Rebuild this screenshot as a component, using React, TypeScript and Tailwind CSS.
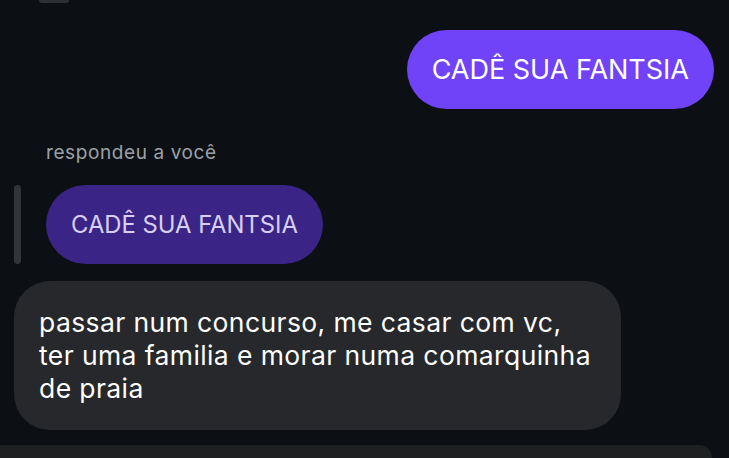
import React from 'react';

const font = { fontFamily: 'Inter, "Noto Sans", sans-serif' };

export default function App() {
  return (
    <div className="w-[729px] h-[458px] overflow-hidden bg-[#0c1014] flex flex-col" style={font}>
      {/* edge of previous bubble */}
      <div className="h-[3px] w-[30px] ml-[39px] rounded-b-[12px] bg-[#2e3034] shrink-0" />

      {/* sent message */}
      <div className="flex justify-end pr-[15px] mt-[27px] shrink-0">
        <div className="h-[79px] px-[25px] rounded-full bg-[#7042f8] flex items-center">
          <span className="text-white text-[27px] leading-none">CADÊ SUA FANTSIA</span>
        </div>
      </div>

      {/* reply label */}
      <div className="mt-[33px] pl-[46px] text-[19px] leading-[22px] tracking-[0.6px] text-[#9da1a6] shrink-0">
        respondeu a você
      </div>

      {/* quoted message */}
      <div className="flex items-stretch gap-[25px] pl-[14px] mt-[21px] shrink-0">
        <div className="w-[7px] rounded-full bg-[#323438]" />
        <div className="h-[79px] px-[25px] rounded-full bg-[#3a2486] flex items-center">
          <span className="text-[#d8d0f2] text-[23.8px] leading-none">CADÊ SUA FANTSIA</span>
        </div>
      </div>

      {/* received message */}
      <div className="ml-[14px] mt-[17px] w-[607px] rounded-[36px] bg-[#26282c] px-[25px] py-[25px] shrink-0">
        <p className="text-white text-[26.5px] leading-[33px] tracking-[0.4px]">
          passar num concurso, me casar com vc,
          <br />
          ter uma familia e morar numa comarquinha
          <br />
          de praia
        </p>
      </div>

      {/* next bubble */}
      <div className="mt-[15px] w-[712px] flex-1 rounded-tr-[40px] bg-[#1e2022]" />
    </div>
  );
}
